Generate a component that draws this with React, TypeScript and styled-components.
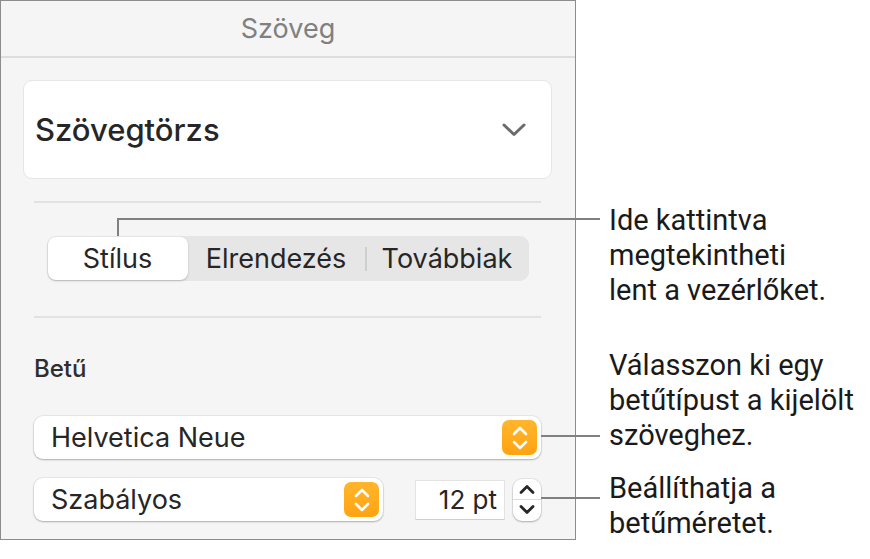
import React from 'react';
import styled, { createGlobalStyle } from 'styled-components';

const GlobalStyle = createGlobalStyle`
  html, body {
    margin: 0;
    padding: 0;
    background: #ffffff;
  }
  * {
    box-sizing: border-box;
  }
`;

const Page = styled.div`
  position: relative;
  display: flex;
  width: 870px;
  height: 559px;
  font-family: Inter, "Noto Sans", sans-serif;
  color: #262626;
`;

const Panel = styled.div`
  width: 576px;
  height: 540px;
  border: 1px solid #8c8c8c;
  background: #f5f5f5;
  display: flex;
  flex-direction: column;
`;

const Header = styled.div`
  height: 57px;
  flex-shrink: 0;
  border-bottom: 2px solid #dedede;
  display: flex;
  align-items: center;
  justify-content: center;
  font-size: 27px;
  color: #808080;
`;

const Body = styled.div`
  padding: 0 34px 0 33px;
  display: flex;
  flex-direction: column;
`;

const StyleCard = styled.div`
  margin: 22px -11px 0 -11px;
  height: 99px;
  background: #ffffff;
  border: 1px solid #e6e6e6;
  border-radius: 9px;
  display: flex;
  align-items: center;
  justify-content: space-between;
  padding: 0 25px 0 11px;
  font-size: 31px;
  font-weight: 500;
  color: #262626;
`;

const Divider = styled.div<{ $top: number }>`
  margin-top: ${(p) => p.$top}px;
  height: 2px;
  background: #e2e2e2;
`;

const Segmented = styled.div`
  margin: 33px auto 0 auto;
  width: 482px;
  height: 45px;
  background: #e6e6e6;
  border-radius: 9px;
  display: flex;
  align-items: center;
  padding: 1px;
`;

const Segment = styled.div<{ $active?: boolean; $w: number }>`
  width: ${(p) => p.$w}px;
  height: 43px;
  display: flex;
  align-items: center;
  justify-content: center;
  font-size: 27px;
  color: #262626;
  border-radius: 8px;
  background: ${(p) => (p.$active ? '#ffffff' : 'transparent')};
  box-shadow: ${(p) => (p.$active ? '0 1px 2px rgba(0,0,0,0.22)' : 'none')};
`;

const SegSep = styled.div`
  width: 2px;
  height: 24px;
  background: #cfcfcf;
`;

const SectionLabel = styled.div`
  margin-top: 36px;
  font-size: 24px;
  font-weight: 500;
  color: #2e2e2e;
  line-height: 30px;
`;

const Popup = styled.div<{ $w: number }>`
  width: ${(p) => p.$w}px;
  height: 43px;
  background: #ffffff;
  border-radius: 9px;
  box-shadow: 0 0 0 1px rgba(0,0,0,0.05), 0 1px 2px rgba(0,0,0,0.25);
  display: flex;
  align-items: center;
  justify-content: space-between;
  padding: 0 4px 0 17px;
  font-size: 27px;
  color: #262626;
`;

const OrangeKnob = styled.div`
  width: 35px;
  height: 35px;
  border-radius: 7px;
  background: linear-gradient(#ffb62c, #ffa312);
  display: flex;
  align-items: center;
  justify-content: center;
`;

const Row = styled.div<{ $top: number }>`
  margin-top: ${(p) => p.$top}px;
  display: flex;
  align-items: center;
`;

const SizeField = styled.div`
  margin-left: 32px;
  width: 90px;
  height: 40px;
  background: #ffffff;
  border: 1px solid #e3e3e3;
  border-bottom-color: #cfcfcf;
  display: flex;
  align-items: center;
  justify-content: flex-end;
  padding-right: 7px;
  font-size: 26px;
  color: #262626;
`;

const Stepper = styled.div`
  margin-left: 8px;
  width: 28px;
  height: 42px;
  background: #ffffff;
  border-radius: 9px;
  box-shadow: 0 0 0 1px rgba(0,0,0,0.06), 0 1px 2px rgba(0,0,0,0.25);
  display: flex;
  flex-direction: column;
`;

const StepHalf = styled.div<{ $top?: boolean }>`
  flex: 1;
  display: flex;
  align-items: center;
  justify-content: center;
  border-bottom: ${(p) => (p.$top ? '1px solid #dcdcdc' : 'none')};
`;

const Notes = styled.div`
  padding-left: 33px;
  display: flex;
  flex-direction: column;
  font-family: Roboto, "Noto Sans", sans-serif;
  font-size: 29px;
  line-height: 35px;
  color: #1a1a1a;
`;

const Note = styled.div<{ $top: number }>`
  margin-top: ${(p) => p.$top}px;
  white-space: nowrap;
`;

const Leader = styled.div`
  position: absolute;
  background: #808080;
`;

const Chevron = () => (
  <svg width="24" height="14" viewBox="0 0 24 14">
    <path d="M2 2 L12 11.5 L22 2" fill="none" stroke="#6b6b6b" strokeWidth="3" strokeLinecap="round" strokeLinejoin="round" />
  </svg>
);

const UpDown = ({ color }: { color: string }) => (
  <svg width="20" height="30" viewBox="0 0 20 30">
    <path d="M4 11 L10 5 L16 11" fill="none" stroke={color} strokeWidth="2.6" strokeLinecap="round" strokeLinejoin="round" />
    <path d="M4 19 L10 25 L16 19" fill="none" stroke={color} strokeWidth="2.6" strokeLinecap="round" strokeLinejoin="round" />
  </svg>
);

const SmallArrow = ({ up }: { up?: boolean }) => (
  <svg width="18" height="12" viewBox="0 0 18 12">
    <path
      d={up ? 'M3 9.5 L9 3.5 L15 9.5' : 'M3 2.5 L9 8.5 L15 2.5'}
      fill="none"
      stroke="#262626"
      strokeWidth="2.8"
      strokeLinecap="round"
      strokeLinejoin="round"
    />
  </svg>
);

const App: React.FC = () => {
  return (
    <Page>
      <GlobalStyle />
      <Panel>
        <Header>Szöveg</Header>
        <Body>
          <StyleCard>
            <span>Szövegtörzs</span>
            <Chevron />
          </StyleCard>
          <Divider $top={22} />
          <Segmented>
            <Segment $active $w={140}>Stílus</Segment>
            <Segment $w={177}>Elrendezés</Segment>
            <SegSep />
            <Segment $w={161}>Továbbiak</Segment>
          </Segmented>
          <Divider $top={35} />
          <SectionLabel>Betű</SectionLabel>
          <Row $top={32}>
            <Popup $w={507}>
              <span>Helvetica Neue</span>
              <OrangeKnob>
                <UpDown color="#ffffff" />
              </OrangeKnob>
            </Popup>
          </Row>
          <Row $top={19}>
            <Popup $w={349}>
              <span>Szabályos</span>
              <OrangeKnob>
                <UpDown color="#ffffff" />
              </OrangeKnob>
            </Popup>
            <SizeField>12 pt</SizeField>
            <Stepper>
              <StepHalf $top>
                <SmallArrow up />
              </StepHalf>
              <StepHalf>
                <SmallArrow />
              </StepHalf>
            </Stepper>
          </Row>
        </Body>
      </Panel>
      <Notes>
        <Note $top={203}>
          Ide kattintva
          <br />
          megtekintheti
          <br />
          lent a vezérlőket.
        </Note>
        <Note $top={40}>
          Válasszon ki egy
          <br />
          betűtípust a kijelölt
          <br />
          szöveghez.
        </Note>
        <Note $top={18}>
          Beállíthatja a
          <br />
          betűméretet.
        </Note>
      </Notes>
      <Leader style={{ left: 117, top: 218, width: 2, height: 18 }} />
      <Leader style={{ left: 117, top: 218, width: 483, height: 2 }} />
      <Leader style={{ left: 541, top: 435, width: 59, height: 2 }} />
      <Leader style={{ left: 541, top: 497, width: 59, height: 2 }} />
    </Page>
  );
};

export default App;
